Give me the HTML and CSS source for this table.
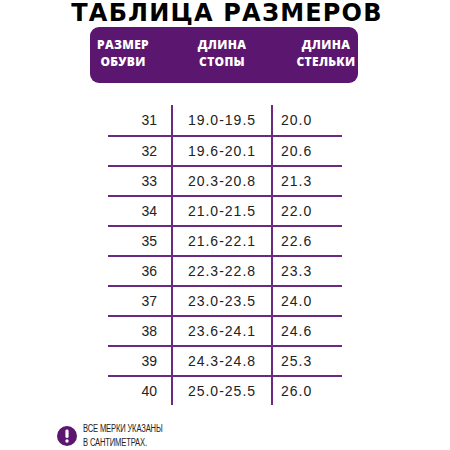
FILE: index.html
```html
<!DOCTYPE html>
<html lang="ru">
<head>
<meta charset="utf-8">
<link rel="stylesheet" href="styles.css">
</head>
<body>
<div class="page">
  <h1 class="title">ТАБЛИЦА РАЗМЕРОВ</h1>
  <div class="head">
    <div class="hcell c1">РАЗМЕР<br>ОБУВИ</div>
    <div class="hcell c2">ДЛИНА<br>СТОПЫ</div>
    <div class="hcell c3">ДЛИНА<br>СТЕЛЬКИ</div>
  </div>
  <div class="table">
    <div class="row"><div class="size">31</div><div class="foot">19.0-19.5</div><div class="insole">20.0</div></div>
    <div class="row"><div class="size">32</div><div class="foot">19.6-20.1</div><div class="insole">20.6</div></div>
    <div class="row"><div class="size">33</div><div class="foot">20.3-20.8</div><div class="insole">21.3</div></div>
    <div class="row"><div class="size">34</div><div class="foot">21.0-21.5</div><div class="insole">22.0</div></div>
    <div class="row"><div class="size">35</div><div class="foot">21.6-22.1</div><div class="insole">22.6</div></div>
    <div class="row"><div class="size">36</div><div class="foot">22.3-22.8</div><div class="insole">23.3</div></div>
    <div class="row"><div class="size">37</div><div class="foot">23.0-23.5</div><div class="insole">24.0</div></div>
    <div class="row"><div class="size">38</div><div class="foot">23.6-24.1</div><div class="insole">24.6</div></div>
    <div class="row"><div class="size">39</div><div class="foot">24.3-24.8</div><div class="insole">25.3</div></div>
    <div class="row"><div class="size">40</div><div class="foot">25.0-25.5</div><div class="insole">26.0</div></div>
  </div>
  <div class="note">
    <svg class="note-icon" width="20" height="20" viewBox="0 0 20 20">
      <circle cx="10" cy="10" r="10" fill="#5b1670"/>
      <rect x="8.4" y="3.6" width="3.2" height="8.4" rx="1.4" fill="#fff"/>
      <circle cx="10" cy="15" r="1.7" fill="#fff"/>
    </svg>
    <div class="note-text">ВСЕ МЕРКИ УКАЗАНЫ<br>В САНТИМЕТРАХ.</div>
  </div>
</div>
</body>
</html>
```
FILE: styles.css
```css
html, body {
  margin: 0;
  padding: 0;
  background: #fff;
}
.page {
  width: 450px;
  height: 450px;
  display: flex;
  flex-direction: column;
  align-items: center;
  font-family: "Liberation Sans", Arial, sans-serif;
}
.title {
  margin: 0;
  height: 27px;
  font-family: "DejaVu Sans", sans-serif;
  font-weight: bold;
  font-size: 24px;
  line-height: 27px;
  letter-spacing: 1.2px;
  color: #000;
  padding-left: 4px;
}
.head {
  width: 268px;
  height: 58px;
  box-sizing: border-box;
  padding-top: 9px;
  background: #5b1670;
  border-radius: 9px;
  display: grid;
  grid-template-columns: 66px 132px 70px;
  margin-left: -2px;
}
.hcell {
  color: #fff;
  font-family: "Open Sans", sans-serif;
  font-weight: 800;
  font-size: 12px;
  line-height: 17px;
  letter-spacing: 0.3px;
  text-align: center;
}
.c3 {
  padding-left: 6px;
}
.table {
  margin-top: 22px;
  width: 234px;
  display: flex;
  flex-direction: column;
}
.row {
  display: grid;
  grid-template-columns: 63px 100px 71px;
  height: 30px;
  box-sizing: border-box;
  border-top: 2px solid #6b2a82;
}
.row:first-child {
  border-top: none;
}
.row > div {
  display: flex;
  align-items: center;
  font-size: 14px;
  color: #222;
}
.size {
  justify-content: flex-end;
  padding-right: 14px;
}
.foot, .insole {
  border-left: 2px solid #6b2a82;
  letter-spacing: 1px;
}
.foot {
  justify-content: center;
}
.insole {
  padding-left: 8px;
}
.note {
  align-self: flex-start;
  margin-left: 57px;
  margin-top: 17px;
  display: flex;
  align-items: center;
  gap: 6px;
}
.note-icon {
  display: block;
}
.note-text {
  font-family: "Liberation Sans", sans-serif;
  font-size: 10px;
  line-height: 14px;
  color: #222;
  letter-spacing: -0.2px;
  transform: scaleX(0.76);
  transform-origin: left center;
}
```
